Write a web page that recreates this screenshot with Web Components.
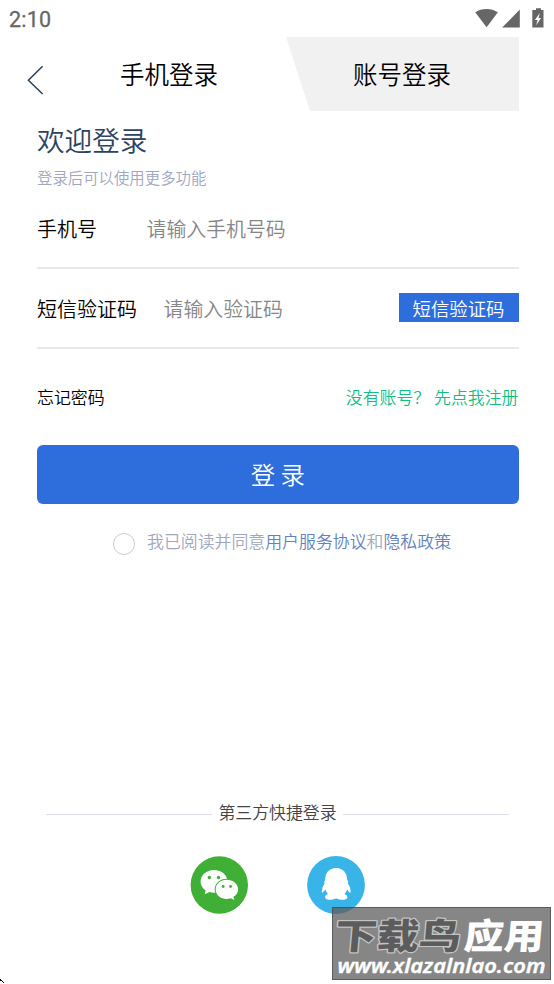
<!DOCTYPE html>
<html lang="zh-CN">
<head>
<meta charset="utf-8">
<title>手机登录</title>
<style>
html,body{margin:0;height:100%;background:#fff;overflow:hidden}
body{font-family:"Noto Sans CJK SC","Noto Sans",sans-serif;font-weight:350;color:#000}
</style>
</head>
<body>
<login-page></login-page>
<script>
const define = (name, html) => customElements.define(name, class extends HTMLElement {
  constructor() {
    super();
    const t = document.createElement('template');
    t.innerHTML = html;
    this.attachShadow({ mode: 'open' }).append(t.content.cloneNode(true));
  }
});

define('status-bar', `
<style>
:host{display:flex;height:37px;box-sizing:border-box;padding:0 7px 0 9px;justify-content:space-between;color:#666;font:400 21.5px/39px Roboto,sans-serif;letter-spacing:.2px;-webkit-text-stroke:.3px #666}
svg{display:block}
</style>
<span>2:10</span>
<svg width="72" height="37" viewBox="475 0 72 37" fill="#666">
<path d="M475.2 12.3C481.5 7.8 491.6 7.8 497.9 12.3L486.6 27.2Z"/>
<path d="M519.8 9.6V27.6H502.2Z"/>
<path d="M536 8.2H541V10H543.5V27.5H532.3V10H536Z"/>
<path d="M539.8 13L534.9 20H537.5L536.2 25.2L541 18.1H538.5Z" fill="#fff"/>
</svg>`);

define('login-tabs', `
<style>
:host{display:flex;height:74px;font-size:24.5px;line-height:73px}
.back{width:120px;padding-left:26px;box-sizing:border-box}
.back svg{display:block}
.on{width:166px}
.off{width:233px;box-sizing:border-box;padding-left:67px;background:#f1f1f1;clip-path:polygon(0 0,100% 0,100% 100%,24px 100%)}
</style>
<div class="back"><svg width="20" height="74" viewBox="26 37 20 74"><path d="M42.6 66.3L28.4 80.2L42.6 94" fill="none" stroke="#2a4058" stroke-width="1.5"/></svg></div>
<div class="on"><slot name="active"></slot></div>
<div class="off"><slot name="other"></slot></div>`);

define('page-heading', `
<style>
:host{display:block;height:85px;padding-top:8px;box-sizing:border-box}
h1{margin:0;font-size:27.6px;line-height:40px;font-weight:inherit;color:#2b4361}
p{margin:7px 0 0;font-size:15.4px;line-height:22px;color:#a1a7c0}
</style>
<h1><slot></slot></h1><p><slot name="note"></slot></p>`);

define('form-field', `
<style>
:host{display:flex;height:80px;box-sizing:border-box;align-items:center;border-bottom:2px solid #e9e9e9;font-size:20px;line-height:30px}
.hint{color:#868686;margin-left:var(--gap);flex:1;font-size:19.9px}
span{padding-top:1px}
</style>
<span><slot></slot></span><span class="hint"><slot name="hint"></slot></span><slot name="action"></slot>`);

define('code-button', `
<style>
:host{display:block;width:120px;height:29px;margin-bottom:1px;background:#2d6ddc;color:#fff;text-align:center;font-size:18.4px;line-height:30px}
</style><slot></slot>`);

define('link-row', `
<style>
:host{display:flex;justify-content:space-between;height:96px;padding-top:35px;box-sizing:border-box;font-size:16.9px;line-height:26px}
.go{color:#10c083;white-space:pre}
</style><span><slot></slot></span><span class="go"><slot name="end"></slot></span>`);

define('submit-button', `
<style>
:host{display:block;height:59px;border-radius:6px;background:#2d6ddc;color:#fff;text-align:center;font-size:24.4px;line-height:58px}
</style><slot></slot>`);

define('agree-line', `
<style>
:host{display:flex;align-items:flex-start;height:50px;padding:24px 0 0 76px;box-sizing:border-box;color:#a1a7bc;font-size:16.9px;line-height:26px;white-space:nowrap}
i{box-sizing:border-box;width:22px;height:22px;margin:5px 12px 0 0;border:1px solid #ccc;border-radius:50%}
b{font-weight:inherit;color:#6482bd}
</style><i></i><span>我已阅读并同意<b>用户服务协议</b>和<b>隐私政策</b></span>`);

define('third-party', `
<style>
:host{display:block;margin-top:245px}
.cap{display:flex;align-items:center;padding:0 45px 0 46px;gap:6px;color:#444;font-size:16.9px;line-height:26px}
.cap:before,.cap:after{content:"";flex:1;height:1px;background:#dedee8;margin-top:5px}
.icons{display:flex;gap:59px;padding:31px 0 0 190px}
svg{display:block}
</style>
<div class="cap"><slot></slot></div>
<div class="icons">
<svg width="58" height="58" viewBox="190 856 58 58">
<circle cx="219.3" cy="885" r="28.7" fill="#40af35"/>
<path d="M213.8 869.9C206.6 869.9 200.6 875 200.6 881.5C200.6 885.2 202.5 888.3 205.6 890.4L204.8 894.2L209.3 891.9Q213.5 893.2 216.5 892.4C214 884.5 219.5 878.5 227.1 879.2C226.1 873.8 220.6 869.9 213.8 869.9Z" fill="#fff"/>
<ellipse cx="226.8" cy="889.3" rx="12.1" ry="10.6" fill="#40af35"/>
<path d="M226.7 879.8C220.5 879.8 215.7 884 215.7 889.4C215.7 894.8 220.5 898.9 226.7 898.9Q228.9 898.9 230.8 898.2L234.3 900.1L233.4 896.8C236.3 895 238.1 892.4 238.1 889.4C238.1 884 233 879.8 226.7 879.8Z" fill="#fff"/>
<g fill="#40af35"><circle cx="209.4" cy="877.5" r="1.7"/><circle cx="218.5" cy="877.5" r="1.7"/><circle cx="223.2" cy="886.5" r="1.4"/><circle cx="230.6" cy="886.5" r="1.4"/></g>
</svg>
<svg width="58" height="58" viewBox="307 856 58 58">
<circle cx="336" cy="885" r="28.9" fill="#39b4e8"/>
<path d="M336.1 868C329.2 868 325.2 873 325.3 879.5Q323.9 881.5 324.6 883.5Q321.8 887 321.8 891.5Q322 893.5 323.2 892L325.5 889.6Q326.2 892.4 328.1 894.1Q325 895 325.1 897.2C325.5 900.6 333.4 900.2 336.1 898.2C338.8 900.2 347.1 900.6 347.5 897.2Q347.4 895 344.4 894.1Q346.3 892.4 347 889.6L349.1 892Q350.6 893.5 350.7 891.5Q350.7 887 347.9 883.5Q348.5 881.5 347.1 879.5C347.1 873 343 868 336.1 868Z" fill="#fff"/>
</svg>
</div>`);

define('site-watermark', `
<style>
:host{position:absolute;left:332px;top:907px;width:219px;height:73px;box-sizing:border-box;background:rgba(92,92,92,.74);border:1px solid rgba(65,65,65,.6);color:#fff}
svg{display:block}
.cn{font:900 35.5px/1 "Noto Sans CJK SC",sans-serif}
.url{font:italic 600 20px/1 "Noto Sans","Open Sans",sans-serif}
</style>
<svg width="217" height="71" viewBox="333 908 217 71">
<g class="cn" stroke-linejoin="round" transform="translate(81 0) skewX(-5)">
<text x="336" y="949.5" textLength="126" lengthAdjust="spacingAndGlyphs" fill="#5c5c5c" stroke="#c4c4c4" stroke-width="2.4" paint-order="stroke">下载鸟</text>
<text x="465" y="949.5" textLength="80" lengthAdjust="spacingAndGlyphs" fill="#fff">应用</text></g>
<text class="url" x="337.5" y="973" textLength="208" lengthAdjust="spacingAndGlyphs" fill="#fff" stroke="#fff" stroke-width=".4">www.xlazalnlao.com</text>
</svg>`);

define('login-page', `
<style>
:host{display:block;position:relative;width:554px;height:984px;overflow:hidden}
main{padding:0 35.5px 0 37px}
.corner{position:absolute;left:0;bottom:0;display:block}
</style>
<status-bar></status-bar>
<login-tabs><span slot="active">手机登录</span><span slot="other">账号登录</span></login-tabs>
<main>
<page-heading>欢迎登录<span slot="note">登录后可以使用更多功能</span></page-heading>
<form-field style="--gap:49.5px;height:73px;padding-bottom:7px">手机号<span slot="hint">请输入手机号码</span></form-field>
<form-field style="--gap:26.5px">短信验证码<span slot="hint">请输入验证码</span><code-button slot="action">短信验证码</code-button></form-field>
<link-row>忘记密码<span slot="end">没有账号？ 先点我注册</span></link-row>
<submit-button>登 录</submit-button>
<agree-line></agree-line>
</main>
<third-party>第三方快捷登录</third-party>
<site-watermark></site-watermark>
<svg class="corner" width="5" height="5"><path d="M0 0h1v1h1v1H0zM2 2h1v1H2zM3 3h1v1H3z"/></svg>`);
</script>
</body>
</html>
